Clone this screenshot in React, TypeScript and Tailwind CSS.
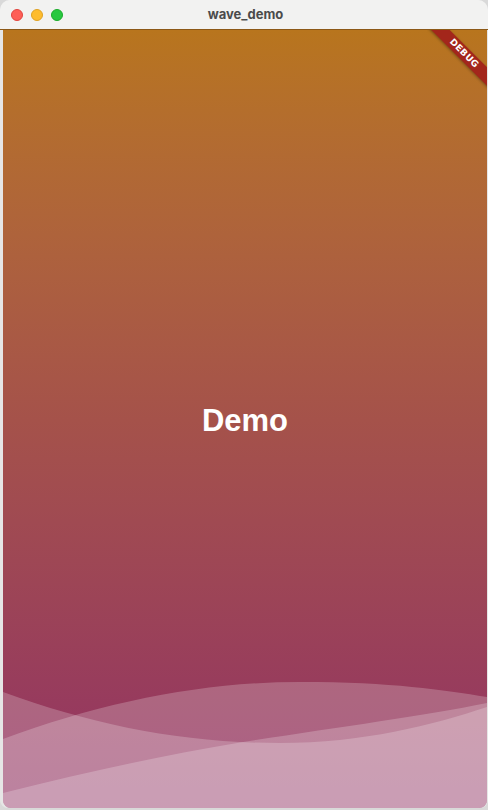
export default function App() {
    return (
        <div className="w-[488px] h-[810px] bg-[#d9d9d9] font-['Liberation_Sans',sans-serif]">
            {/* Window */}
            <div className="w-[488px] h-[808px] flex flex-col rounded-t-[10px] rounded-b-[8px] overflow-hidden bg-[#e6e6e6]">
                {/* Title bar */}
                <div className="relative h-[30px] shrink-0 bg-[#f2f2f1] border-b border-[#8c5816] flex items-center">
                    <div className="flex items-center gap-[8px] pl-[11px]">
                        <span className="w-[12px] h-[12px] rounded-full bg-[#fe5f57] border border-[#e0443e]" />
                        <span className="w-[12px] h-[12px] rounded-full bg-[#febc2e] border border-[#dea123]" />
                        <span className="w-[12px] h-[12px] rounded-full bg-[#28c840] border border-[#1aab29]" />
                    </div>
                    <div className="absolute inset-0 flex items-center justify-center pl-[3px] text-[13px] font-bold text-[#4b4b4b] font-['Inter',sans-serif]">
                        wave_demo
                    </div>
                </div>

                {/* Content */}
                <div className="flex-1 flex pl-[3px] pr-[1px]">
                    <div className="relative flex-1 overflow-hidden rounded-b-[8px] bg-gradient-to-b from-[#b8751d] via-[#a5524a] to-[#923163] flex items-center justify-center">
                        <span className="relative text-white text-[31px] font-bold leading-none mt-[3px]">Demo</span>

                        {/* Waves */}
                        <svg className="absolute bottom-0 left-0" width="484" height="128" viewBox="0 0 484 128">
                            <path d="M0,12 C90,45 180,63 277,63 C360,63 430,45 484,27 L484,128 L0,128 Z" fill="white" fillOpacity="0.22" />
                            <path d="M0,59 C100,22 200,2 297,2 C390,2 440,10 484,17 L484,128 L0,128 Z" fill="white" fillOpacity="0.22" />
                            <path d="M0,113 C80,93 160,75 240,62 C330,48 420,36 484,23 L484,128 L0,128 Z" fill="white" fillOpacity="0.22" />
                        </svg>

                        {/* Debug banner */}
                        <div className="absolute top-0 right-0 w-[60px] h-[60px] overflow-hidden">
                            <div className="absolute left-[-13px] top-[17px] w-[100px] h-[13px] rotate-45 bg-[#a3261b] shadow-[0_1px_3px_rgba(0,0,0,0.35)] flex items-center justify-center text-white text-[9px] font-black font-['DejaVu_Sans',sans-serif] tracking-[0.3px]">
                                DEBUG
                            </div>
                        </div>
                    </div>
                </div>
            </div>
        </div>
    );
}
